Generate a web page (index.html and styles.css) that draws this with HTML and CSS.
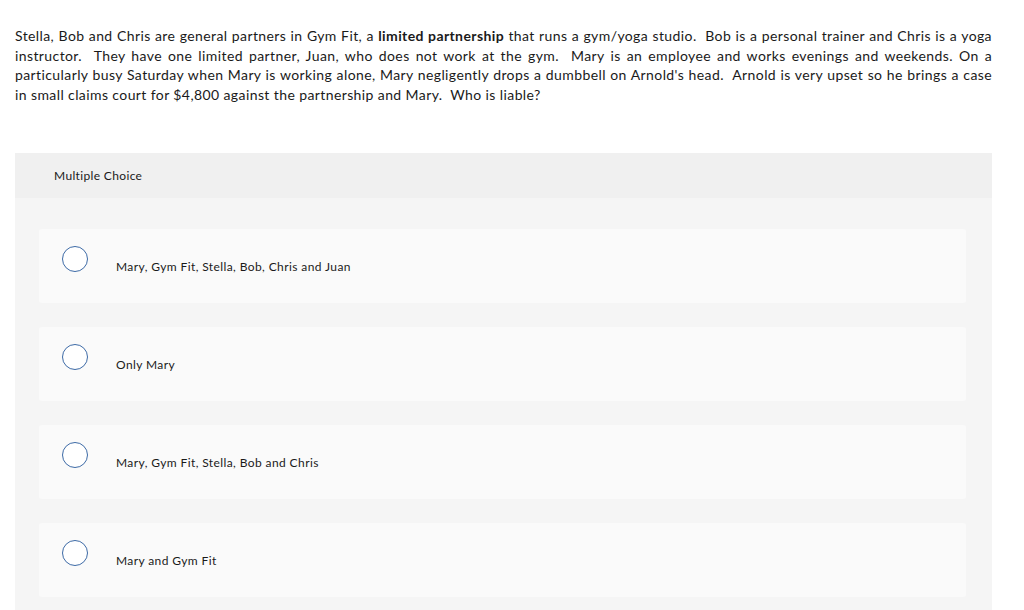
FILE: index.html
```html
<!DOCTYPE html>
<html>
<head>
<meta charset="utf-8">
<link rel="stylesheet" href="styles.css">
</head>
<body>
<div class="page">
  <p class="question">Stella, Bob and Chris are general partners in Gym Fit, a <strong>limited partnership</strong> that runs a gym/yoga studio.&nbsp; Bob is a personal trainer and Chris is a yoga instructor.&nbsp; They have one limited partner, Juan, who does not work at the gym.&nbsp; Mary is an employee and works evenings and weekends. On a particularly busy Saturday when Mary is working alone, Mary negligently drops a dumbbell on Arnold's head.&nbsp; Arnold is very upset so he brings a case in small claims court for $4,800 against the partnership and Mary.&nbsp; Who is liable?</p>
  <section class="panel">
    <header class="panel-head">Multiple Choice</header>
    <div class="options">
      <label class="option"><span class="radio"></span><span class="opt-text">Mary, Gym Fit, Stella, Bob, Chris and Juan</span></label>
      <label class="option"><span class="radio"></span><span class="opt-text">Only Mary</span></label>
      <label class="option"><span class="radio"></span><span class="opt-text">Mary, Gym Fit, Stella, Bob and Chris</span></label>
      <label class="option"><span class="radio"></span><span class="opt-text">Mary and Gym Fit</span></label>
    </div>
  </section>
</div>
</body>
</html>
```
FILE: styles.css
```css
html, body {
  margin: 0;
  padding: 0;
  background: #ffffff;
}
body {
  font-family: Lato, "Open Sans", Arial, sans-serif;
  color: #1a1a1a;
  overflow: hidden;
  height: 610px;
}
.page {
  padding: 26px 32px 0 15px;
}
.question {
  margin: 0;
  font-size: 14px;
  letter-spacing: 0.4px;
  line-height: 19.7px;
  text-align: justify;
}
.question strong {
  font-weight: 700;
}
.panel {
  margin-top: 48px;
  background: #f5f5f5;
}
.panel-head {
  background: #f0f0f0;
  height: 45px;
  box-sizing: border-box;
  padding: 15px 0 0 39px;
  font-size: 12px;
  letter-spacing: 0.35px;
  line-height: 16px;
}
.options {
  padding: 31px 26px 24px 24px;
  display: flex;
  flex-direction: column;
  gap: 24px;
}
.option {
  display: flex;
  align-items: flex-start;
  background: #fafafa;
  border-radius: 3px;
  height: 74px;
  box-sizing: border-box;
  padding: 17px 0 0 23px;
}
.radio {
  width: 24px;
  height: 24px;
  border: 1px solid #3d6aa6;
  border-radius: 50%;
  background: #fff;
  flex: none;
}
.opt-text {
  margin: 13px 0 0 28px;
  font-size: 12px;
  letter-spacing: 0.4px;
  line-height: 16px;
}
```
